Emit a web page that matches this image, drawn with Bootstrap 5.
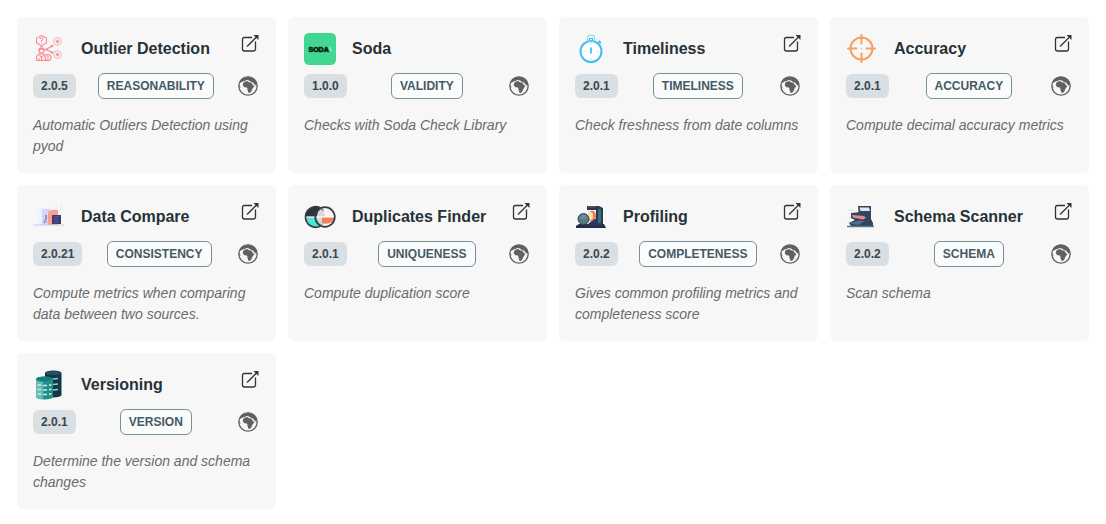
<!DOCTYPE html>
<html lang="en">
<head>
<meta charset="utf-8">
<meta name="viewport" content="width=device-width, initial-scale=1">
<title>Packs</title>
<link href="https://cdn.jsdelivr.net/npm/bootstrap@5.3.0/dist/css/bootstrap.min.css" rel="stylesheet">
<style>
  body { font-family: "Liberation Sans", Arial, sans-serif; background: #fff; color: #263238; }
  .pack-page { padding: 17px; }
  .pack-grid { --bs-gutter-x: 12px; --bs-gutter-y: 12px; }
  .pack { background: #f7f7f7; border: 0; border-radius: 6px; padding: 16px; }
  .pack-head { gap: 16px; min-height: 32px; }
  .pack-logo { width: 32px; height: 32px; flex: none; }
  .pack-title { font-size: 16px; line-height: 24px; font-weight: 700; margin: 0; }
  .pack-link { color: #333; width: 20px; height: 20px; line-height: 0; }
  .pack-link svg { width: 20px; height: 20px; }
  .pack-meta { margin: 8px 0 16px; }
  .pack-version, .pack-kind { font-size: 12px; line-height: 18px; font-weight: 700; border-radius: 6px; }
  .pack-version { background: #d9dfe2; color: #37474f; padding: 3px 8px; }
  .pack-kind { border: 1px solid #78909c; color: #455a64; background: #fafbfb; padding: 3px 8px; }
  .pack-globe { width: 24px; height: 24px; color: #616161; }
  .pack-text { font-size: 14px; line-height: 21px; min-height: 42px; font-style: italic; color: #6b6b6b; margin: 0; }
</style>
</head>
<body>
<svg class="d-none" aria-hidden="true">
  <symbol id="open" viewBox="0 0 20 20">
    <path d="M12 4.500H4.500Q2.500 4.500 2.500 6.500V16Q2.500 18 4.500 18H13.500Q15.500 18 15.500 16V8.500" fill="none" stroke="currentColor" stroke-width="1.300"/>
    <path d="M7 13.500L17 3.500" fill="none" stroke="currentColor" stroke-width="1.300"/>
    <path d="M13.500 2H18.500V7Z" fill="currentColor"/>
  </symbol>
  <symbol id="globe" viewBox="0 0 24 24">
    <circle cx="12" cy="12" r="9.200" fill="none" stroke="currentColor" stroke-width="1.300"/>
    <path d="M4 7Q7 2.500 12 2.800Q18.500 3 21 9.500L20.500 12L18.500 10.500L17 8.500L15 8L13 6.500L10.500 6L8.500 7L6.500 7.500L4.500 9Z" fill="currentColor"/>
    <path d="M8 8L11 7L13 8.200L15.500 8.700L17 11.200L18.500 12L16.500 14.500L15.800 16.500L14 19L12.300 18.500L11.500 15.500L11 13.500L8.500 13.200L6.800 11.500L7 9.500Z" fill="currentColor"/>
    <path d="M3 10L4.500 13.500L3.500 14Z" fill="currentColor"/>
  </symbol>
</svg>

<main class="container-fluid pack-page">
  <div class="row row-cols-1 row-cols-sm-2 row-cols-lg-4 pack-grid">

    <div class="col"><article class="card pack h-100">
      <div class="pack-head d-flex align-items-center">
        <svg class="pack-logo" viewBox="0 0 32 32" fill="none" stroke="#f58a8e" stroke-width="1.100" aria-hidden="true">
          <path d="M8.500 2.500L13.500 5V10L10.500 11.500L8.500 13.500L6.500 11.500L3.500 10V5Z"/><path d="M7 6Q7 4.800 8.500 4.800T10 6.300Q10 7 8.500 7.700V8.500M8.500 9.500V10.500"/>
          <circle cx="8.500" cy="17.500" r="2.600"/><path d="M5.800 17.300Q8.500 14 11.200 17.300" stroke-width="1.800"/><path d="M3.500 27.500V25Q3.500 21 7 21H10Q12 21 12.500 23M3.500 27.500H17M6.500 22L8.500 24.500L10.500 22M8.500 24V27M6 25V27.500"/>
          <circle cx="15" cy="24.500" r="3"/><path d="M15 22.500V26.500"/>
          <path d="M14 16L18.500 13.500M14 17L18.500 19"/><circle cx="13.500" cy="16.500" r=".8"/><circle cx="19" cy="13" r=".8"/><circle cx="19" cy="19.500" r=".8"/>
          <g stroke-width=".8" opacity=".8"><circle cx="24.500" cy="8.500" r="3.800"/><circle cx="24.500" cy="8.500" r="1.500" fill="#f58a8e"/><circle cx="24.500" cy="21.500" r="3.800"/><circle cx="24.500" cy="21.500" r="1.500" fill="#f58a8e"/></g>
        </svg>
        <h2 class="pack-title flex-grow-1">Outlier Detection</h2>
        <a href="#" class="pack-link align-self-start" aria-label="Open Outlier Detection"><svg><use href="#open"/></svg></a>
      </div>
      <div class="pack-meta d-flex justify-content-between align-items-center"><span class="pack-version">2.0.5</span><span class="pack-kind">REASONABILITY</span><svg class="pack-globe" role="img" aria-label="Public"><use href="#globe"/></svg></div>
      <p class="pack-text">Automatic Outliers Detection using pyod</p>
    </article></div>

    <div class="col"><article class="card pack h-100">
      <div class="pack-head d-flex align-items-center">
        <svg class="pack-logo" viewBox="0 0 32 32" aria-hidden="true">
          <rect width="32" height="32" rx="5" fill="#42d790"/>
          <text x="4.500" y="18.500" font-family="Liberation Sans, Arial, sans-serif" font-size="7" font-weight="700" fill="#07170f" stroke="#07170f" stroke-width=".6">SODA</text>
          <path d="M25 13.500H26L28 18.500H27Z" fill="#b9f4d8"/>
        </svg>
        <h2 class="pack-title flex-grow-1">Soda</h2>
      </div>
      <div class="pack-meta d-flex justify-content-between align-items-center"><span class="pack-version">1.0.0</span><span class="pack-kind">VALIDITY</span><svg class="pack-globe" role="img" aria-label="Public"><use href="#globe"/></svg></div>
      <p class="pack-text">Checks with Soda Check Library</p>
    </article></div>

    <div class="col"><article class="card pack h-100">
      <div class="pack-head d-flex align-items-center">
        <svg class="pack-logo" viewBox="0 0 32 32" fill="none" stroke="#44bff3" aria-hidden="true">
          <circle cx="16" cy="18.500" r="10.500" fill="#fff" stroke-width="2"/>
          <circle cx="16" cy="5.500" r="3.500" stroke-width="1.200" stroke="#8bd3f2"/><path d="M14.500 8V5.500H17.500V8" stroke-width="1.200"/><path d="M23.500 10L25 8.500M23.500 7.800L26 10" stroke-width="1.700"/>
          <path d="M16 14.500V20.500" stroke-width="1.800"/><path d="M16 10.500V12M16 25.500V27M8.500 18.500H10M22 18.500H23.500" stroke-width=".8" opacity=".5"/>
        </svg>
        <h2 class="pack-title flex-grow-1">Timeliness</h2>
        <a href="#" class="pack-link align-self-start" aria-label="Open Timeliness"><svg><use href="#open"/></svg></a>
      </div>
      <div class="pack-meta d-flex justify-content-between align-items-center"><span class="pack-version">2.0.1</span><span class="pack-kind">TIMELINESS</span><svg class="pack-globe" role="img" aria-label="Public"><use href="#globe"/></svg></div>
      <p class="pack-text">Check freshness from date columns</p>
    </article></div>

    <div class="col"><article class="card pack h-100">
      <div class="pack-head d-flex align-items-center">
        <svg class="pack-logo" viewBox="0 0 32 32" fill="none" stroke="#f7a062" stroke-width="2" stroke-linecap="round" aria-hidden="true">
          <circle cx="15.500" cy="15.500" r="11"/><path d="M15.500 2V10.500M15.500 20.500V29M2 15.500H10.500M20.500 15.500H29"/><circle cx="15.500" cy="15.500" r=".7" fill="#f7a062" stroke="none"/>
        </svg>
        <h2 class="pack-title flex-grow-1">Accuracy</h2>
        <a href="#" class="pack-link align-self-start" aria-label="Open Accuracy"><svg><use href="#open"/></svg></a>
      </div>
      <div class="pack-meta d-flex justify-content-between align-items-center"><span class="pack-version">2.0.1</span><span class="pack-kind">ACCURACY</span><svg class="pack-globe" role="img" aria-label="Public"><use href="#globe"/></svg></div>
      <p class="pack-text">Compute decimal accuracy metrics</p>
    </article></div>

    <div class="col"><article class="card pack h-100">
      <div class="pack-head d-flex align-items-center">
        <svg class="pack-logo" viewBox="0 0 32 32" aria-hidden="true">
          <path d="M3 13Q3 7 9 7H24L28 16L26 24H6Z" fill="#edf3fc"/><rect x="9" y="8" width="8" height="16" fill="#d6d7f7"/>
          <path d="M15 11L18 9H25V24H15Z" fill="#f6a08e"/><rect x="19" y="14" width="9" height="9" fill="#3b3a72"/><path d="M21 16H26M21 18.500H25M21 21H26" stroke="#54609b" stroke-width="1"/>
          <path d="M13 14L13 18L11 22" fill="none" stroke="#7d7bca" stroke-width="1.500"/><path d="M12.500 19L14 22" stroke="#f6a08e" stroke-width="1.300"/>
          <path d="M0 24H31" stroke="#c9cced" stroke-width="1"/><path d="M22 6H24M27 5H29M28 8H30" stroke="#f5dcd7"/>
        </svg>
        <h2 class="pack-title flex-grow-1">Data Compare</h2>
        <a href="#" class="pack-link align-self-start" aria-label="Open Data Compare"><svg><use href="#open"/></svg></a>
      </div>
      <div class="pack-meta d-flex justify-content-between align-items-center"><span class="pack-version">2.0.21</span><span class="pack-kind">CONSISTENCY</span><svg class="pack-globe" role="img" aria-label="Public"><use href="#globe"/></svg></div>
      <p class="pack-text">Compute metrics when comparing data between two sources.</p>
    </article></div>

    <div class="col"><article class="card pack h-100">
      <div class="pack-head d-flex align-items-center">
        <svg class="pack-logo" viewBox="0 0 32 32" aria-hidden="true">
          <path d="M1 16A10.500 10.500 0 0 1 22 16Z" fill="#30343d"/><path d="M1 16A10.500 10.500 0 0 0 22 16Z" fill="#50e3d5"/>
          <path d="M13 16A9.500 10 0 0 1 31 16Z" fill="#f4f4f8"/><path d="M13 16A9.500 10 0 0 0 31 16Z" fill="#f47f5b"/>
          <path d="M16.500 7.500Q21 11 21 16H13Q13 11 16.500 7.500Z" fill="#d9dadd"/><path d="M13 16H18V24Q13 21 13 16Z" fill="#e6d4ce"/>
          <path d="M2 16H30" stroke="#fff" stroke-width="1.200"/>
          <path d="M16.500 7A10.200 10.200 0 1 0 16.500 25" fill="none" stroke="#383b43" stroke-width="1.700"/><circle cx="21" cy="16" r="9.800" fill="none" stroke="#383b43" stroke-width="1.700"/>
        </svg>
        <h2 class="pack-title flex-grow-1">Duplicates Finder</h2>
        <a href="#" class="pack-link align-self-start" aria-label="Open Duplicates Finder"><svg><use href="#open"/></svg></a>
      </div>
      <div class="pack-meta d-flex justify-content-between align-items-center"><span class="pack-version">2.0.1</span><span class="pack-kind">UNIQUENESS</span><svg class="pack-globe" role="img" aria-label="Public"><use href="#globe"/></svg></div>
      <p class="pack-text">Compute duplication score</p>
    </article></div>

    <div class="col"><article class="card pack h-100">
      <div class="pack-head d-flex align-items-center">
        <svg class="pack-logo" viewBox="0 0 32 32" aria-hidden="true">
          <path d="M1 25L4 23H29L31 27H1Z" fill="#252b47"/><path d="M12 5H24L28 7V25H21V9L12 9Z" fill="#29385a"/><path d="M23 8H26V22H23Z" fill="#347279"/>
          <path d="M13 5H21V6.500H13Z" fill="#7f4555"/><ellipse cx="17" cy="15" rx="4" ry="5.500" fill="#ef8052"/><ellipse cx="15.500" cy="15" rx="2.500" ry="4" fill="#ffe0ae"/>
          <path d="M14 22L20 18H23V25H12Z" fill="#29385a"/>
          <circle cx="8.500" cy="18" r="5.500" fill="#597786" stroke="#34475f" stroke-width="1"/><path d="M5 17H12M6 15H11" stroke="#809da7" stroke-width="1"/>
        </svg>
        <h2 class="pack-title flex-grow-1">Profiling</h2>
        <a href="#" class="pack-link align-self-start" aria-label="Open Profiling"><svg><use href="#open"/></svg></a>
      </div>
      <div class="pack-meta d-flex justify-content-between align-items-center"><span class="pack-version">2.0.2</span><span class="pack-kind">COMPLETENESS</span><svg class="pack-globe" role="img" aria-label="Public"><use href="#globe"/></svg></div>
      <p class="pack-text">Gives common profiling metrics and completeness score</p>
    </article></div>

    <div class="col"><article class="card pack h-100">
      <div class="pack-head d-flex align-items-center">
        <svg class="pack-logo" viewBox="0 0 32 32" aria-hidden="true">
          <path d="M2 9H8M3 17H6M1 21H5" stroke="#dceef1" stroke-width="2"/><path d="M12 5H25V18H13Z" fill="#354764"/><path d="M13.500 6.500H23L24 10H14.500Z" fill="#d5edf4"/>
          <path d="M5 12L15 11H25V18L27 22V25H5L3 22L9 19L5 17Z" fill="#34445f"/><path d="M6 14L18 15L20 17L17 18.500L7 16.500Z" fill="#eb8790"/>
          <path d="M4 22.500L13 19.500L19 20L12 24Z" fill="#52728a"/><path d="M1 25.500H28" stroke="#56778c" stroke-width="1.500"/>
        </svg>
        <h2 class="pack-title flex-grow-1">Schema Scanner</h2>
        <a href="#" class="pack-link align-self-start" aria-label="Open Schema Scanner"><svg><use href="#open"/></svg></a>
      </div>
      <div class="pack-meta d-flex justify-content-between align-items-center"><span class="pack-version">2.0.2</span><span class="pack-kind">SCHEMA</span><svg class="pack-globe" role="img" aria-label="Public"><use href="#globe"/></svg></div>
      <p class="pack-text">Scan schema</p>
    </article></div>

    <div class="col"><article class="card pack h-100">
      <div class="pack-head d-flex align-items-center">
        <svg class="pack-logo" viewBox="0 0 32 32" aria-hidden="true">
          <path d="M12 4A8 2.500 0 0 1 28.500 4V26A8 2.500 0 0 1 12 26Z" fill="#123746"/><ellipse cx="20.200" cy="4" rx="7.500" ry="2" fill="#245260"/>
          <path d="M20 10L25 9.500M20 15.500L25 15M20 21L25 20.500" stroke="#9cc8c9" stroke-width="1.500"/>
          <path d="M3 10A8.500 2.500 0 0 1 20 10V28A8.500 2.500 0 0 1 3 28Z" fill="#238f88"/><path d="M3 11Q6 13 10 13V30Q3 29.500 3 28Z" fill="#64bdb4"/><ellipse cx="11.500" cy="9.800" rx="8" ry="2.200" fill="#167c76"/>
          <path d="M4.500 16H8M4.500 20.500H8M4.500 25H8M10 16.500H14M10 21H14M10 25.500H14M16 16H18.500M16 20.500H18.500M16 25H18.500" stroke="#c7f0e9" stroke-width="1.300"/>
        </svg>
        <h2 class="pack-title flex-grow-1">Versioning</h2>
        <a href="#" class="pack-link align-self-start" aria-label="Open Versioning"><svg><use href="#open"/></svg></a>
      </div>
      <div class="pack-meta d-flex justify-content-between align-items-center"><span class="pack-version">2.0.1</span><span class="pack-kind">VERSION</span><svg class="pack-globe" role="img" aria-label="Public"><use href="#globe"/></svg></div>
      <p class="pack-text">Determine the version and schema changes</p>
    </article></div>

  </div>
</main>
<script src="https://cdn.jsdelivr.net/npm/bootstrap@5.3.0/dist/js/bootstrap.bundle.min.js"></script>
</body>
</html>
